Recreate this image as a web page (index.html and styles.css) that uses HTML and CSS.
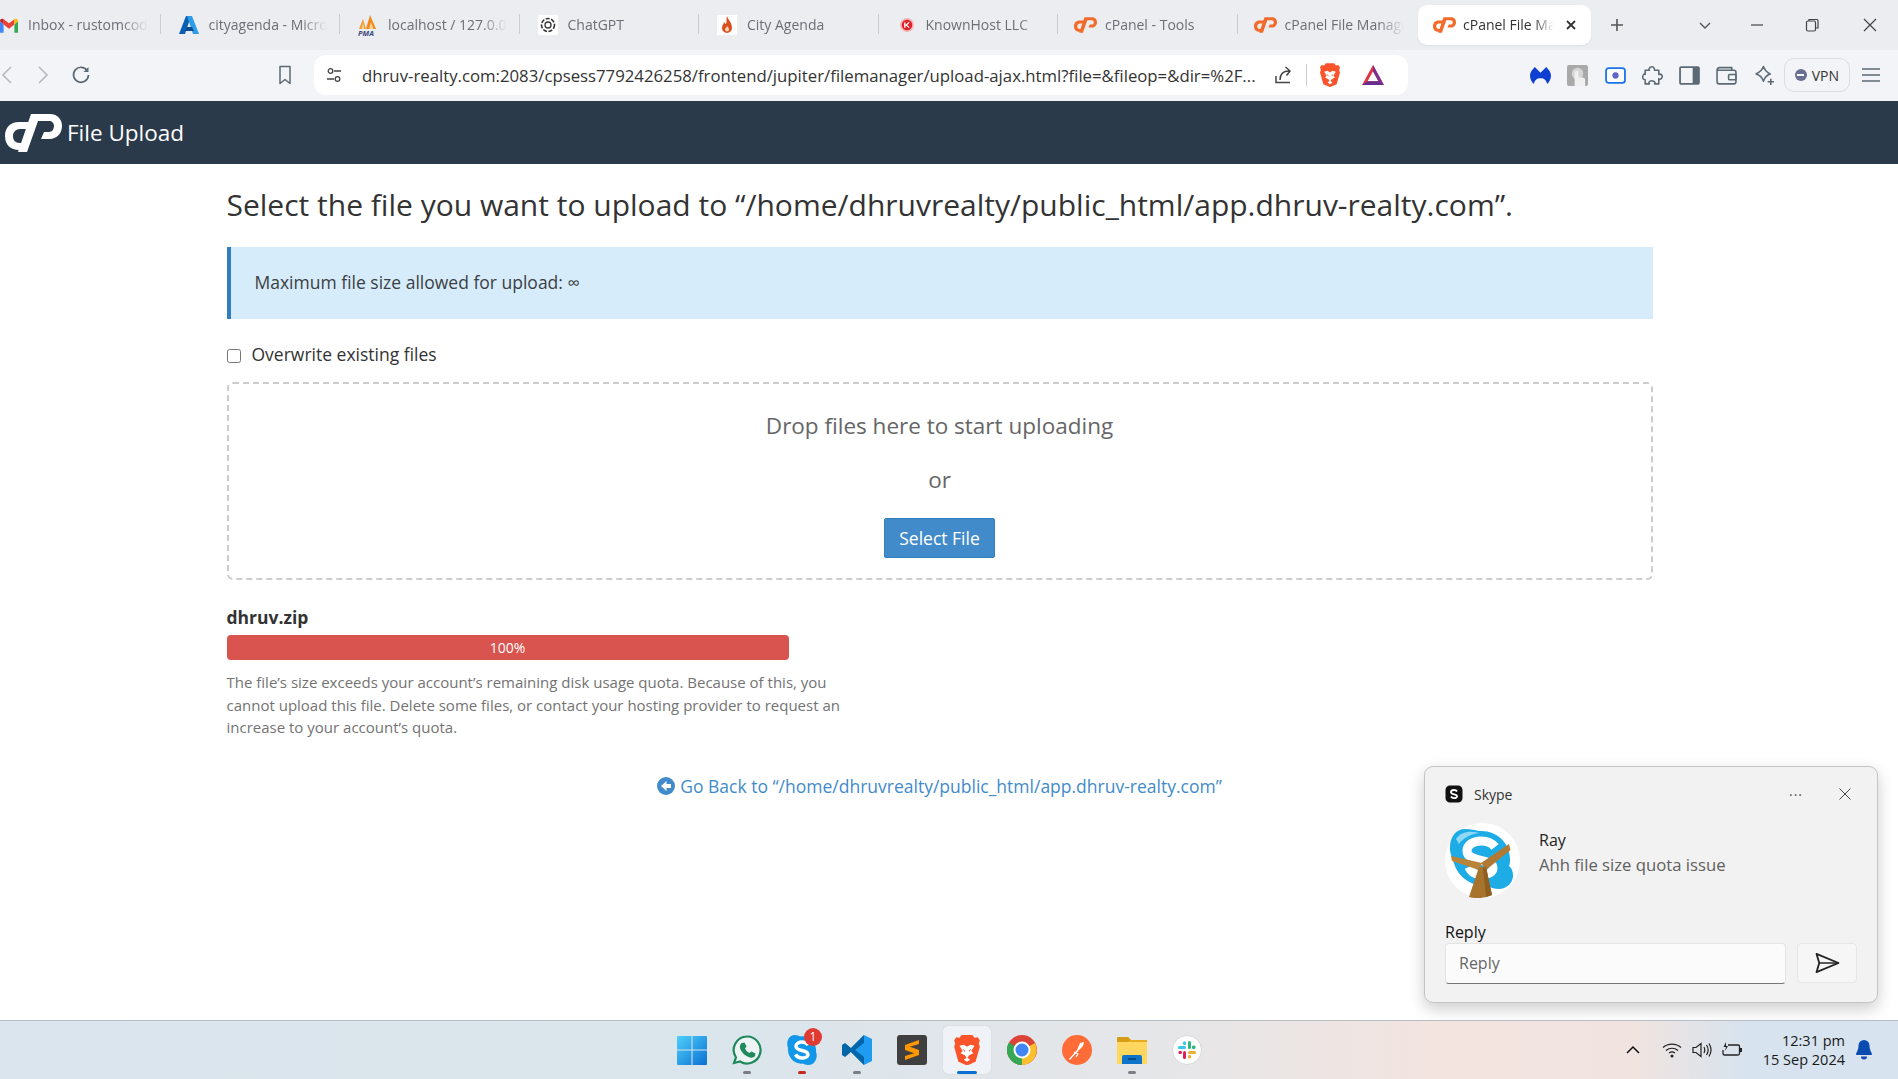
FILE: index.html
```html
<!DOCTYPE html>
<html lang="en">
<head>
<meta charset="utf-8">
<title>cPanel File Upload</title>
<link rel="stylesheet" href="styles.css">
</head>
<body>
<svg class="defs" width="0" height="0" aria-hidden="true">
  <symbol id="cp" viewBox="0 0 57 38"><path d="M31 8H14C5 8 0 14 0 22c0 9 6 14 14 14h7l3-7h-9c-5 0-7-3-7-7s3-7 7-7h13z"/><path d="M26 0h19c8 0 12 6 12 12 0 8-6 13-12 13h-9l3-7h5c3 0 5-3 5-6s-2-5-5-5H33L22 38h-9z"/></symbol>
  <symbol id="brave" viewBox="0 0 24 28"><path d="M7 0h10l2 2.500 3-.5 2 3-1 3 1 3-4 14-8 3.500L4 25 0 11l1-3-1-3 2-3 3 .5z" fill="#fb542b"/><path d="M12 11l-3-2-4 1 3 5-2 2 4 2 2 3 2-3 4-2-2-2 3-5-4-1z" fill="#fff"/><path d="M9 23l3 2 3-2-3-2z" fill="#fff"/><path d="M10 14l-2-1 2 3zM14 14l2-1-2 3z" fill="#fb542b"/></symbol>
</svg>
<div class="tabbar">
  <div class="tab tab-first">
    <svg class="fav" viewBox="0 0 20 16"><path d="M0 3v13h4V7z" fill="#4285f4"/><path d="M16 7v9h4V3z" fill="#34a853"/><path d="M16 1v6l-6 4.500L4 7V1l6 4.500z" fill="#ea4335"/><path d="M0 3l4 4V1C2 0 0 1 0 3z" fill="#c5221f"/><path d="M20 3l-4 4V1c2-1 4 0 4 2z" fill="#fbbc04"/></svg>
    <span class="tab-title">Inbox - rustomcoder</span>
  </div>
  <div class="tab">
    <svg class="fav" viewBox="0 0 20 20"><path d="M7 1h5L6 19H0z" fill="#0a5fb4"/><path d="M8 1h5l7 18h-6z" fill="#2d9de8"/><path d="M8 12h5l2 4H6z" fill="#0a4c94"/></svg>
    <span class="tab-title">cityagenda - Microsoft</span>
  </div>
  <div class="tab">
    <svg class="fav fav-pma" viewBox="0 0 20 14"><path d="M1 14L5 4l3 10z" fill="#f29b38"/><path d="M8 14L12 0l6 14z" fill="#f08a1d"/><path d="M11 14l2-7 2.500 7zM3.500 14L5 8l1.500 6z" fill="#fbd08a"/></svg>
    <span class="tab-title">localhost / 127.0.0.1</span>
    <span class="pma">PMA</span>
  </div>
  <div class="tab">
    <svg class="fav" viewBox="0 0 20 20"><rect width="20" height="20" fill="#fff" rx="2"/><circle cx="10" cy="10" r="6.500" fill="none" stroke="#333" stroke-width="1.600" stroke-dasharray="4 1.500"/><circle cx="10" cy="10" r="3" fill="none" stroke="#333" stroke-width="1.300"/></svg>
    <span class="tab-title">ChatGPT</span>
  </div>
  <div class="tab">
    <svg class="fav" viewBox="0 0 20 20"><rect width="20" height="20" fill="#fff"/><path d="M10 1c1 4 5 6 5 12a5 5 0 0 1-10 0c0-3 2-4 2-6 1 1 1 2 2 2 1-2 0-5 1-8z" fill="#d9501e"/><path d="M10 11c1 1 2 2 2 3.500a2 2 0 0 1-4 0c0-1.500 2-2 2-3.500z" fill="#fbd5b5"/></svg>
    <span class="tab-title">City Agenda</span>
  </div>
  <div class="tab">
    <svg class="fav fav-sm" viewBox="0 0 16 16"><circle cx="8" cy="8" r="8" fill="#f4b6b6"/><circle cx="8" cy="8" r="6" fill="#e0202a"/><path d="M5.500 5v6M10.500 5L7 8l3.500 3" stroke="#fff" stroke-width="1.500" fill="none"/></svg>
    <span class="tab-title">KnownHost LLC</span>
  </div>
  <div class="tab">
    <svg class="fav fav-cp"><use href="#cp"/></svg>
    <span class="tab-title">cPanel - Tools</span>
  </div>
  <div class="tab tab-nosep">
    <svg class="fav fav-cp"><use href="#cp"/></svg>
    <span class="tab-title">cPanel File Manager v3</span>
  </div>
  <div class="tab tab-active">
    <svg class="fav fav-cp"><use href="#cp"/></svg>
    <span class="tab-title">cPanel File Manager</span>
    <svg class="tab-x" viewBox="0 0 12 12"><path d="M2 2l8 8M10 2l-8 8" stroke="#333" stroke-width="1.800"/></svg>
  </div>
  <svg class="win-ic win-plus" viewBox="0 0 14 14"><path d="M7 1v12M1 7h12" stroke="#555" stroke-width="1.600"/></svg>
  <div class="win-controls">
    <svg class="win-ic win-chev" viewBox="0 0 14 14"><path d="M2 5l5 5 5-5" fill="none" stroke="#555" stroke-width="1.400"/></svg>
    <svg class="win-ic win-min" viewBox="0 0 14 14"><path d="M1 7h12" stroke="#444" stroke-width="1.200"/></svg>
    <svg class="win-ic win-max" viewBox="0 0 14 14"><rect x="1.500" y="3" width="9" height="10" rx="1.500" fill="none" stroke="#444" stroke-width="1.200"/><path d="M4 3V1.500h8a1 1 0 0 1 1 1V10h-2.500" fill="none" stroke="#444" stroke-width="1.200"/></svg>
    <svg class="win-ic win-close" viewBox="0 0 14 14"><path d="M1 1l12 12M13 1L1 13" stroke="#444" stroke-width="1.200"/></svg>
  </div>
</div>

<div class="toolbar">
  <div class="nav">
    <svg class="nav-ic nav-back" viewBox="0 0 12 20"><path d="M10 2L2 10l8 8" fill="none" stroke="#b4bac2" stroke-width="1.600"/></svg>
    <svg class="nav-ic nav-fwd" viewBox="0 0 12 20"><path d="M2 2l8 8-8 8" fill="none" stroke="#b4bac2" stroke-width="1.600"/></svg>
    <svg class="nav-ic nav-reload" viewBox="0 0 20 20"><path d="M16.500 6A7.500 7.500 0 1 0 17.500 10" fill="none" stroke="#5c6a76" stroke-width="1.700"/><path d="M17.500 2v5h-5z" fill="#5c6a76"/></svg>
    <svg class="nav-ic nav-mark" viewBox="0 0 14 20"><path d="M2 1.500h10v17l-5-4-5 4z" fill="none" stroke="#5c6a76" stroke-width="1.500" stroke-linejoin="round"/></svg>
  </div>
  <div class="urlbar">
    <svg class="url-site" viewBox="0 0 16 16"><circle cx="4.500" cy="4" r="2.300" fill="none" stroke="#444" stroke-width="1.300"/><path d="M8 4h7M1 12h7" stroke="#444" stroke-width="1.300"/><circle cx="11.500" cy="12" r="2.300" fill="none" stroke="#444" stroke-width="1.300"/></svg>
    <span class="url-text">dhruv-realty.com:2083/cpsess7792426258/frontend/jupiter/filemanager/upload-ajax.html?file=&amp;fileop=&amp;dir=%2F...</span>
    <svg class="url-share" viewBox="0 0 20 20"><path d="M2 11v6.500h14" fill="none" stroke="#444" stroke-width="1.500"/><path d="M6 15c0-6 3-9 9-9M11.500 2L16 6l-3.500 4.500" fill="none" stroke="#444" stroke-width="1.500"/></svg>
    <span class="url-sep"></span>
    <svg class="url-brave"><use href="#brave"/></svg>
    <svg class="url-bat" viewBox="0 0 24 22"><path d="M12 0L0 22h24z" fill="#e0343f"/><path d="M12 7l-6 11h12z" fill="#fff"/><path d="M12 0v7l6 11 6 4z" fill="#7b2f8e"/><path d="M6 18h12l6 4H0z" fill="#662d91"/></svg>
  </div>
  <div class="exts">
    <svg class="ext" viewBox="0 0 22 20"><path d="M5 1l6 6 6-6c3 3 5 6 5 9 0 4-2 7-4 9-1-4-3-6-7-6s-6 2-7 6c-2-2-4-5-4-9 0-3 2-6 5-9z" fill="#0d3fd1"/></svg>
    <svg class="ext" viewBox="0 0 22 22"><rect width="22" height="22" rx="2" fill="#a9a9a9"/><circle cx="11" cy="9" r="6" fill="#d6d6d6"/><path d="M8 22V8a2 2 0 0 1 4 0v5h4a3 3 0 0 1 3 3v6z" fill="#f0f0f0"/></svg>
    <svg class="ext" viewBox="0 0 20 16"><rect x="1" y="1" width="18" height="14" rx="2.500" fill="#fff" stroke="#1a73e8" stroke-width="1.700"/><circle cx="10" cy="8" r="3" fill="#5f66c9"/></svg>
    <svg class="ext" viewBox="0 0 20 20"><path d="M8 2c2-1 4 0 4 3h4v4c2-1 4 1 3 3s-3 2-3 1v5h-4c1-2-1-3-3-3s-3 2-2 3H3v-4c-2 0-3-2-2-4s2-2 2-1V5h4c-1-1 0-2 1-3z" fill="none" stroke="#5c6a76" stroke-width="1.500" stroke-linejoin="round"/></svg>
    <svg class="ext" viewBox="0 0 20 18"><rect x="1" y="1" width="18" height="16" rx="1" fill="none" stroke="#5c6a76" stroke-width="1.700"/><rect x="13" y="1" width="6" height="16" fill="#5c6a76"/></svg>
    <svg class="ext" viewBox="0 0 20 18"><path d="M1 4a2.500 2.500 0 0 1 2.500-2.500H15V4M1 4v11a2 2 0 0 0 2 2h14a2 2 0 0 0 2-2V6a2 2 0 0 0-2-2z" fill="none" stroke="#5c6a76" stroke-width="1.500"/><rect x="12" y="8" width="7" height="5" rx="1" fill="none" stroke="#5c6a76" stroke-width="1.500"/></svg>
    <svg class="ext" viewBox="0 0 20 20"><path d="M9 1.500c1 3 3 5.500 6.500 7-3.500 1-5.500 3.500-6.500 7-1-3.500-3.500-6-7-7 3.500-1.500 6-4 7-7z" fill="none" stroke="#5c6a76" stroke-width="1.500" stroke-linejoin="round"/><path d="M16 13v6M13 16h6" stroke="#5c6a76" stroke-width="1.500"/></svg>
  </div>
  <div class="vpn"><span class="vpn-dot"></span>VPN</div>
  <svg class="menu" viewBox="0 0 20 16"><path d="M1 2h18M1 8h18M1 14h18" stroke="#5c6a76" stroke-width="1.500"/></svg>
</div>

<header class="appbar">
  <svg class="app-logo"><use href="#cp"/></svg>
  <span class="app-title">File Upload</span>
</header>

<main class="main">
  <div class="container">
    <h1 class="heading">Select the file you want to upload to “/home/dhruvrealty/public_html/app.dhruv-realty.com”.</h1>
    <div class="info">Maximum file size allowed for upload: ∞</div>
    <label class="overwrite"><input type="checkbox" class="check"><span>Overwrite existing files</span></label>
    <div class="dropzone">
      <div class="drop-text">Drop files here to start uploading</div>
      <div class="drop-or">or</div>
      <button class="btn" type="button">Select File</button>
    </div>
    <div class="file-block">
      <div class="file-name">dhruv.zip</div>
      <div class="bar">100%</div>
      <p class="help">The file’s size exceeds your account’s remaining disk usage quota. Because of this, you cannot upload this file. Delete some files, or contact your hosting provider to request an increase to your account’s quota.</p>
    </div>
    <div class="back-row">
      <a class="back" href="#"><svg class="back-ic" viewBox="0 0 18 18"><circle cx="9" cy="9" r="9" fill="#428bca"/><path d="M9.500 4L4 9l5.500 5v-3H14V7H9.500z" fill="#fff"/></svg>Go Back to “/home/dhruvrealty/public_html/app.dhruv-realty.com”</a>
    </div>
  </div>

  <aside class="toast">
    <div class="toast-head">
      <svg class="toast-logo" viewBox="0 0 18 18"><path d="M5 0.500h8a4.500 4.500 0 0 1 4.500 4.500v8a4.500 4.500 0 0 1-4.500 4.500H5A4.500 4.500 0 0 1 .5 13V5A4.500 4.500 0 0 1 5 .5z" fill="#111"/><path d="M12 6.500C11.500 5.500 10 5 9 5 7.500 5 6 5.700 6 7.200c0 2.800 6 1.500 6 4 0 1.300-1.500 1.900-3 1.900-1.200 0-2.500-.6-3.100-1.600" fill="none" stroke="#fff" stroke-width="1.800"/></svg>
      <span class="toast-app">Skype</span>
      <span class="toast-dots">···</span>
      <svg class="toast-x" viewBox="0 0 12 12"><path d="M.500.500l11 11M11.500.500l-11 11" stroke="#444" stroke-width="1"/></svg>
    </div>
    <div class="toast-body">
      <svg class="avatar" viewBox="0 0 75 75">
        <circle cx="37.500" cy="37.500" r="37.500" fill="#fff"/>
        <path d="M20 6c6 0 10 1 14 2 18-1 31 12 31 28 0 3 0 5-1 7 4 3 4 8 4 10 0 7-7 13-14 13-4 0-8-1-11-3-16 1-32-9-35-27-3-5-3-9-3-12C5 14 11 6 20 6z" fill="#1eace6"/>
        <path d="M11 16c4-7 14-9 23-6-8 1-16 5-20 11z" fill="#8fd8f5"/>
        <path d="M50 24c-3-4-8-6-14-6-8 0-14 4-14 10 0 12 26 7 26 17 0 4-5 7-11 7-6 0-11-3-13-8" fill="none" stroke="#fff" stroke-width="9"/>
        <path d="M6 33l1 5 27 9 3-7z" fill="#b9833a"/>
        <path d="M64 21l1.500 6L41 47l-5-7z" fill="#b07a34"/>
        <path d="M34 44h7l6 28q-11 5-23 2z" fill="#a8732c"/>
        <path d="M38 45l3-1 6 28-6 2z" fill="#8f5f22"/>
      </svg>
      <div class="toast-msg">
        <div class="toast-name">Ray</div>
        <div class="toast-text">Ahh file size quota issue</div>
      </div>
    </div>
    <div class="toast-label">Reply</div>
    <div class="toast-reply">
      <div class="toast-input">Reply</div>
      <div class="toast-send"><svg viewBox="0 0 28 24" class="send-ic"><path d="M2 2l24 10L2 22l3-10z" fill="none" stroke="#222" stroke-width="2" stroke-linejoin="round"/><path d="M5 12h21" stroke="#222" stroke-width="1.600"/></svg></div>
    </div>
  </aside>
</main>

<footer class="taskbar">
  <div class="task-apps">
    <div class="app"><svg viewBox="0 0 30 30"><defs><linearGradient id="win" x1="0" y1="0" x2="1" y2="1"><stop offset="0" stop-color="#4fd0fb"/><stop offset="1" stop-color="#0a6fd1"/></linearGradient></defs><path d="M1 1h13.500v13.500H0V2a1 1 0 0 1 1-1zM15.500 1H29a1 1 0 0 1 1 1v12.500H15.500zM0 15.500h14.500V30H1a1 1 0 0 1-1-1zM15.500 15.500H30V29a1 1 0 0 1-1 1H15.500z" fill="url(#win)"/></svg></div>
    <div class="app app-run"><svg viewBox="0 0 30 30"><path d="M15 1.500a13.500 13.500 0 1 1-7 25l-6 1.500 2-5.500A13.500 13.500 0 0 1 15 1.500z" fill="#eef3f4" stroke="#1f8a5b" stroke-width="2.200"/><path d="M10 8l2.500-.5 2 4-1.500 2c1 2 2.500 3.500 4.500 4.500l2-1.500 4 2-.5 2.500c-1 1.500-3 2-5 1.500-5-1.500-8.500-5-10-9.500-.5-2 .5-4 1.500-5z" fill="#1f8a5b"/></svg></div>
    <div class="app app-run app-red"><svg viewBox="0 0 30 30"><path d="M8 0c2 0 4 1 5 1.500C22 0 30 8 29 17c2 4 0 13-8 13-2 0-4-1-5-1.500C8 30 0 22 1 13-1 8 1 0 8 0z" fill="#1296e8"/><path d="M21 10c-1.500-2-3.500-3-6-3-3 0-6 1.500-6 4.500 0 5 12 3 12 8 0 2-2.500 3.500-6 3.500-2.500 0-5-1-6.500-3.500" fill="none" stroke="#fff" stroke-width="3.500"/></svg><span class="badge">1</span></div>
    <div class="app app-run"><svg viewBox="0 0 30 30"><path d="M22 0l8 4v22l-8 4L7 15z" fill="#1f9cf0"/><path d="M22 0L9 13 3 8 0 10v10l3 2 6-5 13 13v-8l-9-7 9-7z" fill="#0065a9"/></svg></div>
    <div class="app"><svg viewBox="0 0 30 30"><rect width="30" height="30" rx="3" fill="#3f3f3f"/><path d="M22 5L8 10v5l14 5v-5L12 12l10-3zM8 25l14-5v-5L8 10v5l10 3-10 3z" fill="#ff9800"/></svg></div>
    <div class="app app-active"><svg class="brave-lg"><use href="#brave"/></svg></div>
    <div class="app"><svg viewBox="0 0 30 30"><circle cx="15" cy="15" r="15" fill="#db4437"/><path d="M15 15L28 8a15 15 0 0 1-13 22z" fill="#fbc02d"/><path d="M15 15L15 30A15 15 0 0 1 2 7.500z" fill="#34a853"/><circle cx="15" cy="15" r="7.500" fill="#4285f4" stroke="#fff" stroke-width="2"/></svg></div>
    <div class="app"><svg viewBox="0 0 30 30"><circle cx="15" cy="15" r="15" fill="#ff6c37"/><path d="M7 24l8-9 3-7 4-1-1 4-5 5-8 9z" fill="#fff"/><path d="M12 17l4 2-2 3" fill="none" stroke="#fff" stroke-width="1.200"/></svg></div>
    <div class="app app-run"><svg viewBox="0 0 30 28"><path d="M0 1h11l3 3h16v24H0z" fill="#ffd75e"/><path d="M0 2a1 1 0 0 1 1-1h10l3 3-3 2H0z" fill="#d69e17"/><path d="M14 4h16v2H11z" fill="#e8ab1c"/><path d="M5 21a2 2 0 0 1 2-2h16a2 2 0 0 1 2 2v7H5z" fill="#0e73c9"/><path d="M11 23h8" stroke="#073c78" stroke-width="1.400"/></svg></div>
    <div class="app"><svg viewBox="0 0 30 30"><circle cx="15" cy="15" r="14.500" fill="#fff" stroke="#d5d8dc" stroke-width="1"/><rect x="6" y="11" width="8" height="3" rx="1.500" fill="#36c5f0"/><rect x="11" y="6.500" width="3" height="3.500" rx="1.200" fill="#36c5f0"/><rect x="16" y="6" width="3" height="8" rx="1.500" fill="#2eb67d"/><rect x="20" y="10.500" width="3.500" height="3.500" rx="1.200" fill="#2eb67d"/><rect x="16" y="16" width="8" height="3" rx="1.500" fill="#ecb22e"/><rect x="16" y="20" width="3" height="3.500" rx="1.200" fill="#ecb22e"/><rect x="11" y="16" width="3" height="8" rx="1.500" fill="#e01e5a"/><rect x="6.500" y="16" width="3.500" height="3" rx="1.200" fill="#e01e5a"/></svg></div>
  </div>
  <div class="tray">
    <svg class="tray-ic tray-chev" viewBox="0 0 14 10"><path d="M1 8l6-6 6 6" fill="none" stroke="#111" stroke-width="1.500"/></svg>
    <svg class="tray-ic tray-wifi" viewBox="0 0 20 16"><path d="M1 5.500c5-4.500 13-4.500 18 0M4 8.500c3.500-3 8.500-3 12 0M7 11c2-1.500 4-1.500 6 0" fill="none" stroke="#222" stroke-width="1.200"/><circle cx="10" cy="14" r="1.500" fill="#222"/></svg>
    <svg class="tray-ic tray-vol" viewBox="0 0 20 16"><path d="M1 5.500h3L9 1.500v13l-5-4H1z" fill="none" stroke="#222" stroke-width="1.200"/><path d="M12 5c1 2 1 4 0 6M14.500 3c2 3 2 7 0 10M17 1.500c2.500 4 2.500 9 0 13" fill="none" stroke="#222" stroke-width="1.200"/></svg>
    <svg class="tray-ic tray-bat" viewBox="0 0 20 16"><path d="M6 3h10a1.500 1.500 0 0 1 1.500 1.500v7A1.500 1.500 0 0 1 16 13H2.500A1.500 1.500 0 0 1 1 11.500V8" fill="none" stroke="#222" stroke-width="1.300"/><path d="M18 6h2v4h-2z" fill="#222"/><path d="M4 0L1.500 5H4l-1 4 3-5H4z" fill="#222"/></svg>
    <div class="clock"><div>12:31 pm</div><div>15 Sep 2024</div></div>
    <svg class="tray-bell" viewBox="0 0 16 20"><path d="M8 0a5.500 5.500 0 0 1 5.500 5.500c0 5 2.500 7.500 2.500 8.500 0 .5-.5 1-1 1H1c-.5 0-1-.5-1-1 0-1 2.500-3.500 2.500-8.500A5.500 5.500 0 0 1 8 0zM5 16.500h6a3 3 0 0 1-6 0z" fill="#0a4bb0"/></svg>
  </div>
</footer>
</body>
</html>
```

FILE: styles.css
```css
* { box-sizing: border-box; }
html, body { height: 100%; }
body {
  margin: 0;
  height: 1079px;
  width: 1898px;
  overflow: hidden;
  display: flex;
  flex-direction: column;
  font-family: "Open Sans", "Noto Sans", sans-serif;
  font-size: 17.5px;
  color: #333;
  background: #fff;
}
.defs { position: absolute; }

/* Tabs */
.tabbar {
  height: 50px;
  flex: none;
  display: flex;
  align-items: center;
  background: #ecedf1;
  position: relative;
}
.tab {
  width: 179.5px;
  height: 40px;
  flex: none;
  display: flex;
  align-items: center;
  position: relative;
  padding-left: 18px;
}
.tab::after {
  content: "";
  position: absolute;
  right: 0;
  top: 9px;
  height: 20px;
  width: 1px;
  background: #c9ccd2;
}
.tab-first { width: 160.5px; padding-left: 0; }
.tab-nosep::after, .tab-active::after { display: none; }
.fav {
  width: 20px;
  height: 20px;
  flex: none;
  margin-right: 10px;
}
.tab-first .fav { width: 18px; height: 15px; }
.fav-pma { height: 14px; margin-top: -7px; }
.fav-sm { width: 14px; height: 14px; margin: 0 12px 0 3px; }
.fav-cp { width: 23px; height: 16px; margin: 0 8px 0 -2px; fill: #f26b2a; }
.tab-title {
  flex: 1;
  min-width: 0;
  white-space: nowrap;
  overflow: hidden;
  font-size: 14px;
  color: #6a6f76;
  margin: 0 13px 2px 0;
  -webkit-mask-image: linear-gradient(90deg, #000 78%, transparent 100%);
  mask-image: linear-gradient(90deg, #000 78%, transparent 100%);
}
.pma {
  position: absolute;
  left: 18px;
  top: 24px;
  font-size: 7.5px;
  line-height: 9px;
  font-weight: 700;
  font-style: italic;
  color: #3a4a80;
}
.tab-active {
  width: 173px;
  margin-left: 1px;
  background: #fff;
  border-radius: 9px;
  padding-left: 15px;
  box-shadow: 0 1px 2px rgba(0,0,0,.06);
}
.tab-active .fav-cp { margin: 0 7px 0 0; }
.tab-active .tab-title { color: #333; margin-right: 11px; }
.tab-x { width: 12px; height: 12px; flex: none; margin-right: 14px; }
.win-ic { width: 14px; height: 14px; flex: none; }
.win-plus { margin-left: 19px; }
.win-controls {
  margin-left: auto;
  display: flex;
  align-items: center;
  padding-right: 21px;
}
.win-min { margin-left: 38px; }
.win-max { margin-left: 41px; }
.win-close { margin-left: 44px; }

/* Toolbar */
.toolbar {
  height: 51px;
  flex: none;
  display: flex;
  align-items: center;
  padding-bottom: 1px;
  background: #f3f4f7;
}
.nav { display: flex; align-items: center; width: 314px; flex: none; }
.nav-ic { flex: none; }
.nav-back { width: 12px; height: 20px; margin-left: 1px; }
.nav-fwd { width: 12px; height: 20px; margin-left: 24px; }
.nav-reload { width: 20px; height: 20px; margin-left: 22px; }
.nav-mark { width: 14px; height: 20px; margin-left: 187px; }
.urlbar {
  width: 1094px;
  height: 40px;
  flex: none;
  background: #fff;
  border-radius: 12px;
  display: flex;
  align-items: center;
  padding-left: 12px;
}
.url-site { width: 16px; height: 16px; flex: none; }
.url-text {
  margin-left: 20px;
  font-size: 16.75px;
  color: #333;
  white-space: nowrap;
  width: 896px;
  flex: none;
  overflow: hidden;
}
.url-share { width: 20px; height: 20px; flex: none; margin-left: 16px; }
.url-sep { width: 1px; height: 22px; background: #ccc; margin-left: 12px; flex: none; }
.url-brave { width: 20px; height: 24px; flex: none; margin-left: 13px; }
.url-bat { width: 22px; height: 20px; flex: none; margin-left: 22px; }
.exts {
  display: flex;
  align-items: center;
  gap: 16.3px;
  margin-left: 122px;
  flex: none;
}
.ext { width: 21px; height: 21px; flex: none; }
.vpn {
  margin-left: 9px;
  width: 66px;
  height: 34px;
  flex: none;
  border: 1px solid #d9dee4;
  border-radius: 10px;
  display: flex;
  align-items: center;
  justify-content: center;
  gap: 5px;
  font-size: 14px;
  color: #333;
}
.vpn-dot {
  width: 12px;
  height: 12px;
  border-radius: 50%;
  background: linear-gradient(#fff, #fff) center / 7px 2px no-repeat, #6a6f92;
}
.menu { width: 20px; height: 16px; flex: none; margin-left: 11px; }

/* App header */
.appbar {
  height: 63px;
  flex: none;
  background: #2b3a4a;
  display: flex;
  align-items: center;
  padding-left: 5px;
  color: #fff;
}
.app-logo { width: 57px; height: 38px; flex: none; fill: #fff; }
.app-title { font-size: 22.5px; margin-left: 5px; }

/* Main */
.main {
  flex: 1;
  min-height: 0;
  position: relative;
  padding-right: 19px;
  background: #fff;
}
.container { width: 1426px; margin: 0 auto; padding-top: 21px; }
.heading {
  margin: 0;
  font-size: 30px;
  font-weight: 400;
  line-height: 40px;
  color: #333;
  white-space: nowrap;
}
.info {
  margin-top: 22px;
  height: 72px;
  background: #d7ecfa;
  border-left: 4px solid #2f7fc1;
  display: flex;
  align-items: center;
  padding: 0 0 2px 24px;
  font-size: 17.5px;
  color: #3a3f44;
}
.overwrite {
  margin-top: 23px;
  height: 24px;
  display: flex;
  align-items: center;
  color: #333;
}
.check { margin: 3px 11px 0 0; width: 14px; height: 14px; flex: none; }
.dropzone {
  margin-top: 16px;
  height: 198px;
  border: 2px dashed #ccc;
  border-radius: 6px;
  display: flex;
  flex-direction: column;
  align-items: center;
  color: #666;
}
.drop-text { margin-top: 26px; font-size: 22.5px; line-height: 32px; }
.drop-or { margin-top: 22px; font-size: 22.5px; line-height: 32px; }
.btn {
  margin-top: 22px;
  width: 111px;
  height: 40px;
  background: #428bca;
  border: 1px solid #357ebd;
  border-radius: 2px;
  color: #fff;
  font: inherit;
  padding: 0;
}
.file-block { width: 626px; margin-top: 25px; }
.file-name { font-weight: 700; font-size: 17.5px; line-height: 24px; color: #333; }
.bar {
  margin-top: 6px;
  width: 562px;
  height: 25px;
  background: #d9534f;
  border-radius: 4px;
  color: #fff;
  font-size: 14px;
  line-height: 25px;
  text-align: center;
}
.help {
  margin: 11px 0 0;
  font-size: 15px;
  line-height: 22.5px;
  color: #737373;
}
.back-row { margin-top: 35px; text-align: center; line-height: 24px; }
.back { color: #428bca; text-decoration: none; font-size: 17.5px; }
.back-ic { width: 18px; height: 18px; vertical-align: -2px; margin-right: 5px; }

/* Toast */
.toast {
  position: absolute;
  right: 20px;
  bottom: 17px;
  width: 454px;
  height: 237px;
  background: #f2f2f2;
  border: 1px solid #c4c4c4;
  border-radius: 9px;
  box-shadow: 0 6px 16px rgba(0,0,0,.2);
  padding: 17px 20px 0;
  color: #1a1a1a;
  font-size: 16px;
}
.toast-head { display: flex; align-items: center; height: 20px; }
.toast-logo { width: 18px; height: 18px; flex: none; }
.toast-app { margin-left: 11px; font-size: 14px; color: #333; }
.toast-dots { margin-left: auto; color: #555; font-size: 14px; letter-spacing: 1px; margin-right: 36px; }
.toast-x { width: 12px; height: 12px; flex: none; margin-right: 6px; }
.toast-body { display: flex; margin-top: 19px; }
.avatar { width: 75px; height: 75px; flex: none; }
.toast-msg { margin-left: 19px; padding-top: 5px; }
.toast-name { line-height: 24px; color: #222; }
.toast-text { line-height: 25px; font-size: 16.7px; color: #606060; }
.toast-label { margin-top: 23px; font-size: 16px; line-height: 22px; color: #111; }
.toast-reply { display: flex; gap: 11px; }
.toast-input {
  width: 344px;
  height: 41px;
  background: #fbfbfb;
  border: 1px solid #e4e4e4;
  border-bottom: 1px solid #777;
  border-radius: 4px;
  padding-left: 13px;
  line-height: 38px;
  font-size: 16px;
  color: #666;
}
.toast-send {
  width: 60px;
  height: 40px;
  background: #f6f6f6;
  border: 1px solid #e6e6e6;
  border-radius: 4px;
  display: flex;
  align-items: center;
  justify-content: center;
}
.send-ic { width: 27px; height: 22px; }

/* Taskbar */
.taskbar {
  height: 59px;
  flex: none;
  border-top: 1px solid #b6bdc4;
  background: linear-gradient(90deg, #dbe5ed 0%, #dbe5ec 40%, #e6e6e8 62%, #f3e4df 76%, #f1e4e0 86%, #d7e3ee 92%, #d7e3ee 100%);
  display: flex;
  align-items: center;
  position: relative;
}
.task-apps {
  margin-left: 668px;
  display: flex;
  align-items: center;
  gap: 7px;
  flex: none;
}
.app {
  width: 48px;
  height: 48px;
  display: flex;
  align-items: center;
  justify-content: center;
  position: relative;
  border-radius: 5px;
}
.app > svg { width: 30px; height: 30px; flex: none; }
.app-run::after, .app-active::after {
  content: "";
  position: absolute;
  bottom: 0;
  left: 20px;
  width: 8px;
  height: 3px;
  border-radius: 2px;
  background: #7b7f85;
}
.app-red::after { background: #c42b1c; }
.app-active { background: #eff3f7; box-shadow: 0 0 1px rgba(0,0,0,.2); }
.app-active::after { left: 14px; width: 20px; background: #0a6fd1; }
.app > .brave-lg { width: 26px; height: 30px; }
.badge {
  position: absolute;
  top: 2px;
  right: 4px;
  width: 18px;
  height: 18px;
  border-radius: 50%;
  background: #e03a32;
  color: #fff;
  font-size: 12px;
  line-height: 18px;
  text-align: center;
}
.tray {
  display: flex;
  align-items: center;
  margin-left: auto;
  padding-right: 26px;
  flex: none;
}
.tray-ic { flex: none; }
.tray-chev { width: 14px; height: 10px; }
.tray-wifi { width: 20px; height: 16px; margin-left: 22px; }
.tray-vol { width: 20px; height: 16px; margin-left: 10px; }
.tray-bat { width: 20px; height: 16px; margin-left: 10px; }
.clock {
  margin-left: 21px;
  text-align: right;
  font-size: 14.5px;
  line-height: 19px;
  color: #1a1a1a;
  white-space: nowrap;
}
.tray-bell { width: 16px; height: 20px; flex: none; margin-left: 11px; }
```
